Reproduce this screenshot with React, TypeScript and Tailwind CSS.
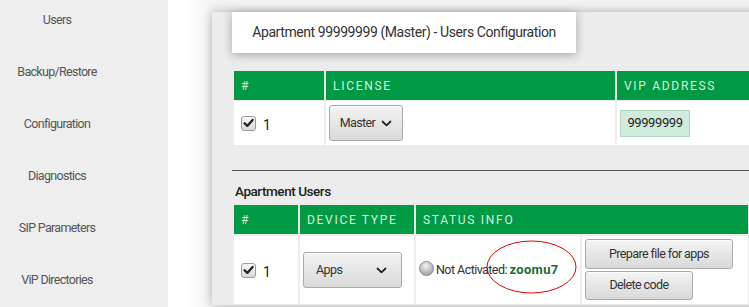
import React from "react";

const FONT = "font-['Roboto','Liberation_Sans',sans-serif]";

function Check() {
  return (
    <span className="inline-flex items-center justify-center w-[15px] h-[15px] rounded-[3px] border border-[#9a9a9a] bg-gradient-to-b from-[#fafafa] to-[#d8d8d8] shrink-0">
      <svg width="11" height="10" viewBox="0 0 11 10">
        <path d="M1.6 5.2 L4.3 7.9 L9.6 1.9" fill="none" stroke="#222" strokeWidth="2.3" strokeLinecap="round" strokeLinejoin="round" />
      </svg>
    </span>
  );
}

function Chevron() {
  return (
    <svg width="11" height="7" viewBox="0 0 11 7">
      <path d="M1.5 1.5 L5.5 5.3 L9.5 1.5" fill="none" stroke="#222" strokeWidth="1.8" strokeLinecap="round" strokeLinejoin="round" />
    </svg>
  );
}

const btn =
  "rounded-[3px] border border-[#a9a9a9] bg-gradient-to-b from-[#f4f4f4] to-[#d9d9d9] shadow-[inset_0_1px_0_#fff] text-[#333] text-[12.5px] tracking-[-0.6px]";

const headCell = "bg-[#009a44] text-[#d6f0de] text-[12px] tracking-[1.7px] pl-[7px] flex items-center";

export default function App() {
  const sidebar = ["Users", "Backup/Restore", "Configuration", "Diagnostics", "SIP Parameters", "ViP Directories"];
  return (
    <div className={`w-[749px] h-[307px] overflow-hidden flex ${FONT}`}>
      <aside className="w-[168px] shrink-0 bg-[#eeeeee]">
        <ul className="w-[114px] flex flex-col gap-[36px] pt-[12px]">
          {sidebar.map((s) => (
            <li key={s} className="text-center text-[12.5px] tracking-[-0.7px] leading-[16px] text-[#555]">
              {s}
            </li>
          ))}
        </ul>
      </aside>
      <main className="flex-1 min-w-0 pl-[44px] pt-[14px] bg-[linear-gradient(to_right,#ffffff_0px,#ffffff_18px,#f3f3f3_44px)]">
        <section className="relative h-full w-[600px] bg-[#ececec] shadow-[0_0_10px_rgba(0,0,0,0.28)] pl-[20px]">
          <div className="-mt-[2px] w-[344px] h-[41px] bg-white shadow-[0_2px_9px_rgba(0,0,0,0.3)] flex items-center justify-center text-[14px] tracking-[-0.42px] text-[#333]">
            Apartment 99999999 (Master) - Users Configuration
          </div>

          <div className="mt-[18px] ml-[2px] grid grid-cols-[90px_289px_200px] gap-x-[2px] gap-y-[1px]">
            <div className={`${headCell} h-[29px]`}>#</div>
            <div className={headCell}>LICENSE</div>
            <div className={headCell}>VIP ADDRESS</div>

            <div className="bg-white h-[44px] flex items-center pl-[7px] gap-[7px] text-[14px] text-[#222]">
              <Check />
              <span className="pt-[4px]">1</span>
            </div>
            <div className="bg-white flex items-center pl-[3px]">
              <div className={`${btn} w-[74px] h-[36px] flex items-center justify-center gap-[6px]`}>
                Master <Chevron />
              </div>
            </div>
            <div className="bg-white flex items-center pl-[3px]">
              <div className="w-[70px] h-[27px] bg-[#d0eadc] border border-[#b3d6c1] flex items-center justify-center text-[13px] tracking-[-0.4px] text-[#222]">
                99999999
              </div>
            </div>
          </div>

          <div className="mt-[25px] h-px bg-[#555] w-[600px]" />
          <div className="mt-[11px] ml-[3px] text-[13.5px] font-medium tracking-[-0.45px] text-[#222] leading-[18px]">Apartment Users</div>

          <div className="mt-[5px] ml-[2px] grid grid-cols-[64px_114px_164px_166px_100px] gap-x-[2px] gap-y-[2px]">
            <div className={`${headCell} h-[29px]`}>#</div>
            <div className={headCell}>DEVICE TYPE</div>
            <div className={`${headCell} col-span-2`}>STATUS INFO</div>
            <div className={headCell}></div>

            <div className="bg-white h-[68px] flex items-center pl-[7px] gap-[7px] text-[14px] text-[#222]">
              <Check />
              <span className="pt-[4px]">1</span>
            </div>
            <div className="bg-white flex items-center pl-[3px]">
              <div className={`${btn} w-[99px] h-[36px] flex items-center justify-between pl-[12px] pr-[14px]`}>
                Apps <Chevron />
              </div>
            </div>
            <div className="bg-white flex items-center pl-[3px] text-[12.5px] tracking-[-0.55px] text-[#333]">
              <span className="w-[15px] h-[15px] shrink-0 rounded-full border border-[#8a8a8a] bg-[radial-gradient(circle_at_45%_30%,#f4f4f4_0%,#bcbcbc_55%,#8a8a8a_100%)] mr-[2px] -mt-[3px]" />
              <span>Not Activated:&nbsp;</span>
              <span className="font-bold text-[13px] tracking-[0.3px] text-[#1b6d33]">zoomu7</span>
            </div>
            <div className="bg-white flex flex-col items-start pl-[3px] pt-[3px] gap-[2px]">
              <div className={`${btn} w-[148px] h-[30px] flex items-center justify-center`}>Prepare file for apps</div>
              <div className={`${btn} w-[108px] h-[29px] flex items-center justify-center`}>Delete code</div>
            </div>
            <div className="bg-white"></div>
          </div>

          <svg className="absolute left-[274px] top-[228px]" width="91" height="54" viewBox="0 0 91 54">
            <ellipse cx="45.5" cy="27" rx="44.5" ry="26" fill="none" stroke="#e00000" strokeWidth="1" />
          </svg>
        </section>
      </main>
    </div>
  );
}
